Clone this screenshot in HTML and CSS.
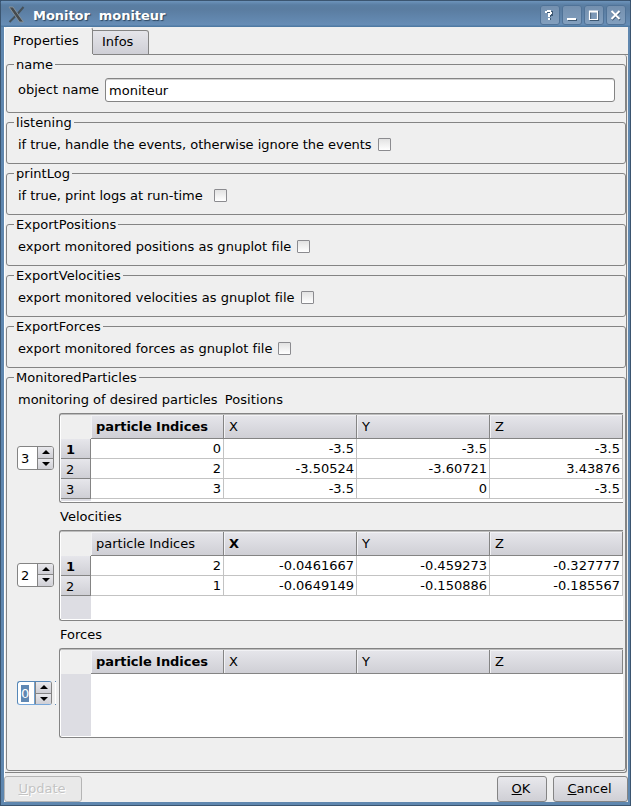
FILE: index.html
```html
<!DOCTYPE html>
<html lang="en">
<head>
<meta charset="utf-8">
<title>Monitor moniteur</title>
<link rel="stylesheet" href="styles.css">
</head>
<body>
<div class="window">
  <header class="titlebar">
    <svg class="logo" width="18" height="18" viewBox="0 0 18 18">
      <path d="M15.500 2L9.500 9M7.500 11L1.500 17" fill="none" stroke="#46525a" stroke-width="2"/>
      <path d="M1 2h4l10.500 15h-4z" fill="#454a4e" stroke="#8a959c" stroke-width=".9"/>
    </svg>
    <h1 class="title">Monitor&nbsp; moniteur</h1>
    <div class="controls">
      <span class="control"><svg width="20" height="20" viewBox="0 0 20 20"><path class="shade" d="M7 8V7H12V10H10V12M9 14h2"/><path d="M6 8V7H7M7 6H11M11 7V9M11 9H9V12M8 14h2"/></svg></span>
      <span class="control"><svg width="20" height="20" viewBox="0 0 20 20"><path class="shade" d="M6 15h9"/><path d="M5 14h9"/></svg></span>
      <span class="control"><svg width="20" height="20" viewBox="0 0 20 20"><path class="shade thin" d="M6.500 6.500h8v9h-8z"/><path class="thin" d="M5.500 6h8v8.500h-8zM5.500 7h8"/></svg></span>
      <span class="control"><svg width="20" height="20" viewBox="0 0 20 20"><path class="shade" d="M6 7l8 8M14 7l-8 8"/><path d="M5.500 6l8 8M13.500 6l-8 8"/></svg></span>
    </div>
  </header>
  <main class="content">
    <nav class="tabs">
      <div class="tab active">Properties</div>
      <div class="tab">Infos</div>
      <div class="tab-rest"></div>
    </nav>
    <div class="panel">
      <section class="group name-group">
        <h2 class="legend">name</h2>
        <div class="field"><label>object name</label><div class="text-input">moniteur</div></div>
      </section>
      <section class="group option"><h2 class="legend">listening</h2><div class="field"><label class="listen-label">if true, handle the events, otherwise ignore the events</label><i class="check"></i></div></section>
      <section class="group option"><h2 class="legend">printLog</h2><div class="field"><label class="log-label">if true, print logs at run-time</label><i class="check"></i></div></section>
      <section class="group option"><h2 class="legend">ExportPositions</h2><div class="field"><label class="export-label">export monitored positions as gnuplot file</label><i class="check"></i></div></section>
      <section class="group option"><h2 class="legend">ExportVelocities</h2><div class="field"><label class="export-label">export monitored velocities as gnuplot file</label><i class="check"></i></div></section>
      <section class="group option"><h2 class="legend">ExportForces</h2><div class="field"><label class="export-label">export monitored forces as gnuplot file</label><i class="check"></i></div></section>
      <section class="group particles">
        <h2 class="legend">MonitoredParticles</h2>
        <div class="captions"><span>monitoring of desired particles</span><span>Positions</span></div>
        <div class="monitor">
          <div class="spin"><span class="value">3</span><span class="arrows"><b><svg width="8" height="4"><path d="M4 0l4 4H0z"/></svg></b><b><svg width="8" height="4"><path d="M0 0h8L4 4z"/></svg></b></span></div>
          <div class="table">
            <div class="row head"><span class="corner"></span><span class="th bold">particle Indices</span><span class="th">X</span><span class="th">Y</span><span class="th">Z</span></div>
            <div class="row"><span class="index bold">1</span><span class="td">0</span><span class="td">-3.5</span><span class="td">-3.5</span><span class="td">-3.5</span></div>
            <div class="row"><span class="index">2</span><span class="td">2</span><span class="td">-3.50524</span><span class="td">-3.60721</span><span class="td">3.43876</span></div>
            <div class="row"><span class="index">3</span><span class="td">3</span><span class="td">-3.5</span><span class="td">0</span><span class="td">-3.5</span></div>
            <div class="row rest"><span class="gutter"></span></div>
          </div>
        </div>
        <div class="caption">Velocities</div>
        <div class="monitor">
          <div class="spin raised"><span class="value">2</span><span class="arrows"><b><svg width="8" height="4"><path d="M4 0l4 4H0z"/></svg></b><b><svg width="8" height="4"><path d="M0 0h8L4 4z"/></svg></b></span></div>
          <div class="table tall">
            <div class="row head"><span class="corner"></span><span class="th">particle Indices</span><span class="th bold">X</span><span class="th">Y</span><span class="th">Z</span></div>
            <div class="row"><span class="index bold">1</span><span class="td">2</span><span class="td">-0.0461667</span><span class="td">-0.459273</span><span class="td">-0.327777</span></div>
            <div class="row"><span class="index">2</span><span class="td">1</span><span class="td">-0.0649149</span><span class="td">-0.150886</span><span class="td">-0.185567</span></div>
            <div class="row rest"><span class="gutter"></span></div>
          </div>
        </div>
        <div class="caption">Forces</div>
        <div class="monitor">
          <div class="spin focused"><span class="value"><mark>0</mark></span><span class="arrows"><b><svg width="8" height="4"><path d="M4 0l4 4H0z"/></svg></b><b><svg width="8" height="4"><path d="M0 0h8L4 4z"/></svg></b></span></div>
          <span class="sliver"></span>
          <div class="table">
            <div class="row head"><span class="corner"></span><span class="th bold">particle Indices</span><span class="th">X</span><span class="th">Y</span><span class="th">Z</span></div>
            <div class="row rest"><span class="gutter"></span></div>
          </div>
        </div>
      </section>
    </div>
    <footer class="footer">
      <div class="button disabled"><u>U</u>pdate</div>
      <div class="button ok"><u>O</u>K</div>
      <div class="button cancel"><u>C</u>ancel</div>
    </footer>
  </main>
</div>
</body>
</html>
```
FILE: styles.css
```css
* { box-sizing: border-box; }
body { margin: 0; font: 13px/16px "DejaVu Sans", sans-serif; color: #000; background: #34506e; overflow: hidden; }
h1, h2 { margin: 0; font-size: 13px; font-weight: normal; }
.window {
  width: 631px; height: 806px; padding: 0 2px 3px 4px; display: flex; flex-direction: column;
  background: #5f87af; border: solid #3b5570; border-width: 1px 1px 1px 0; border-radius: 4px 4px 0 0;
  box-shadow: inset 1px 0 #3b5570;
}
.titlebar {
  height: 26px; margin: 0 -2px 0 -3px; padding: 0 4px 0 7px; display: flex; align-items: center; flex: none;
  background: linear-gradient(#6d94bb 0, #5a7ea3 4px, #5a7ca0 8px, #668db6 24px, #4f7aa3 25px);
}
.logo { flex: none; }
.title { flex: 1; margin: 3px 0 0 7px; font-weight: bold; font-size: 13px; letter-spacing: -.04px; color: #fff; text-shadow: 1px 1px 1px #2c4660; }
.controls { display: flex; gap: 2px; margin-top: 2px; }
.control { width: 20px; height: 20px; border-radius: 3px; background: linear-gradient(#738fae, #83a0bf); box-shadow: inset 0 0 0 1px #507398; }
.control svg { display: block; }
.control path { fill: none; stroke: #fff; stroke-width: 2; }
.control .shade { stroke: #3d5873; }
.control .thin { stroke-width: 1.200; }
.content { flex: 1; min-height: 0; background: #efefef; display: flex; flex-direction: column; border-left: 1px solid #fff; }
.tabs { display: flex; height: 28px; flex: none; align-items: flex-end; }
.tab {
  width: 56px; height: 25px; padding: 3px 0 0 9px; background: linear-gradient(#e5e5ea, #cfcfd6);
  border: 1px solid #848484; border-left: 0; border-radius: 0 3px 0 0;
}
.tab.active { width: 88px; height: 27px; margin-bottom: 1px; padding: 5px 0 0 8px; background: #efefef; border-color: #fff #848484 #efefef; border-bottom: 0; border-radius: 3px 3px 0 0; }
.tab-rest { flex: 1; height: 1px; background: #848484; }
.panel { height: 718px; flex: none; padding: 9px 0 0 1px; margin-right: 1px; border: solid #848484; border-width: 0 1px 1px 0; border-radius: 0 3px 3px 0; }
.group { position: relative; width: 620px; height: 42px; margin-bottom: 9px; padding: 13px 0 0 11px; border: 1px solid #848484; border-radius: 3px; }
.name-group { height: 49px; }
.legend { position: absolute; left: 7px; top: -8px; padding: 0 2px; background: #efefef; letter-spacing: .03px; }
.field { display: flex; align-items: center; height: 16px; gap: 6px; white-space: nowrap; }
.name-group .field { height: 24px; }
.option label { padding-top: 2px; }
.listen-label { letter-spacing: -.035px; }
.log-label { margin-right: 5px; letter-spacing: -.035px; }
.export-label { letter-spacing: .03px; }
.text-input { width: 510px; height: 24px; padding: 4px 3px; background: #fff; border: 1px solid #848484; border-radius: 3px; box-shadow: inset 0 1px #d2d2d2; }
.check { width: 13px; height: 13px; border: 1px solid #8b8b8f; border-radius: 1px; background: linear-gradient(#e2e2e2, #fff); }
.particles { height: 394px; margin: 0; padding: 14px 0 0 10px; }
.captions { display: flex; gap: 7px; height: 21px; padding-left: 1px; white-space: nowrap; }
.captions span:last-child { letter-spacing: .12px; }
.monitor { display: flex; align-items: center; }
.spin { width: 37px; height: 24px; margin-right: 5px; display: flex; background: #fff; border: 1px solid #848484; border-radius: 3px; overflow: hidden; flex: none; }
.raised { margin-bottom: 2px; }
.value { flex: 1; padding: 4px 0 0 3px; }
.arrows { width: 16px; display: flex; flex-direction: column; border-left: 1px solid #848484; }
.arrows b { flex: 1; display: flex; align-items: center; padding-left: 4px; background: linear-gradient(#e8e8ec, #cfcfd5); }
.arrows b + b { border-top: 1px solid #848484; }
.arrows svg { display: block; }
.focused { width: 35px; margin-right: 3px; border-color: #5587b8 #848484 #76a7da #5587b8; }
.focused .value { padding-top: 3px; border-right: 1px solid #6fa0d0; }
mark { display: block; width: 8px; height: 17px; padding-top: 1px; background: #6088b3; color: #fff; }
.sliver { width: 1px; height: 24px; margin-right: 3px; background: #fff; border: solid #6088b3; border-width: 1px 0; }
.table { width: 564px; height: 90px; display: flex; flex-direction: column; flex: none; border: 1px solid #848484; border-right: 0; border-radius: 3px 0 0 3px; padding: 1px 0 1px 1px; background: #fff; box-shadow: inset 0 1px #bdbdbd; }
.tall { height: 91px; }
.row { display: grid; grid-template-columns: 30px repeat(4, 133px); height: 20px; flex: none; }
.head { height: 24px; }
.rest { flex: 1; height: auto; }
.corner { background: #efefef; }
.gutter { background: #dddde3; }
.th { padding: 4px 0 0 5px; background: linear-gradient(#e6e6eb, #cfcfd5); border: solid #848484; border-width: 0 1px 1px 0; box-shadow: inset 1px 1px #f2f2f5; }
.th.bold { letter-spacing: -.06px; }
.index { padding: 3px 0 0 5px; line-height: 16px; background: linear-gradient(#e6e6eb, #cfcfd5); border: solid #848484; border-width: 0 1px 1px 0; }
.td { padding: 2px 2px 0 0; text-align: right; border: solid #c3c3c3; border-width: 0 1px 1px 0; }
.bold { font-weight: bold; }
.caption { height: 27px; padding: 6px 0 0 43px; }
.footer { display: flex; margin-top: 3px; height: 27px; align-items: flex-start; }
.button { height: 26px; width: 77px; padding: 4px 2px 0 0; text-align: center; border: 1px solid #848484; border-radius: 3px; background: linear-gradient(#e8e8ec, #cfcfd5); }
.disabled { width: 78px; margin-left: -1px; color: #c3c3c3; border-color: #b5b5b5; background: #e9e9e9; text-shadow: 1px 1px #fff; }
.ok { width: 50px; margin-left: auto; }
.cancel { width: 75px; margin-left: 6px; }
```
